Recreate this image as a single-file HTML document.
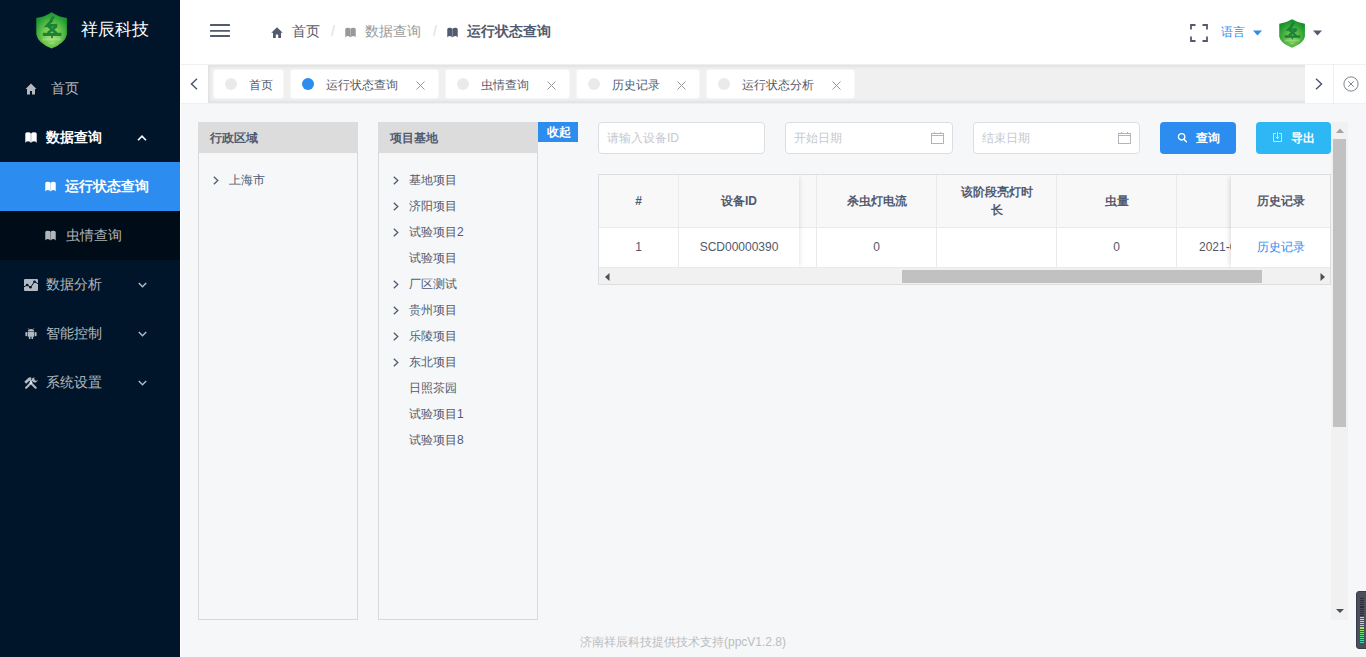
<!DOCTYPE html>
<html><head><meta charset="utf-8">
<style>
*{box-sizing:border-box;margin:0;padding:0}
html,body{width:1366px;height:657px;overflow:hidden;background:#f5f7f9;font-family:"Liberation Sans",sans-serif;color:#515a6e}
.abs{position:absolute}
.t{position:absolute;white-space:nowrap;line-height:20px}
#side{position:absolute;left:0;top:0;width:180px;height:657px;background:#001529}
#side .t{font-size:14px;color:rgba(255,255,255,.7)}
#hdr{position:absolute;left:180px;top:0;width:1186px;height:64px;background:#fff}
#tagnav{position:absolute;left:180px;top:64px;width:1186px;height:40px;background:#f0f0f0;border-top:1px solid #f0f0f0;border-bottom:1px solid #f0f0f0}
.tag{position:absolute;top:4px;border:1px solid #f6f6f6;height:30px;background:#fff;border-radius:3px}
.tag .dot{position:absolute;left:11px;top:8px;width:12px;height:12px;border-radius:50%;background:#e8eaec}
.tag .t{font-size:12px;top:5px;color:#515a6e}
.tag .x{position:absolute;top:11px;width:9px;height:9px}
.panel{position:absolute;top:122px;width:160px;height:498px;border:1px solid #d9d9d9;border-top:none}
.panel .ph{position:absolute;left:-1px;top:0;width:160px;height:31px;background:#dcdcdc}
.panel .t{font-size:12px}
.arr{position:absolute;width:6px;height:9px}
.inp{position:absolute;top:122px;height:32px;background:#fff;border:1px solid #dcdee2;border-radius:4px}
.inp .t{font-size:12px;color:#c5c8ce;top:5px}
.btn{position:absolute;top:122px;height:32px;border-radius:4px}
.btn .t{font-size:12px;font-weight:bold;color:#fff;top:6px}
#tbl{position:absolute;left:598px;top:174px;width:733px;height:111px;border:1px solid #dcdee2;background:#fff;overflow:hidden}
.th{position:absolute;top:0;height:53px;background:#f8f8f9;border-right:1px solid #e8eaec;border-bottom:1px solid #e8eaec}
.td{position:absolute;top:53px;height:40px;background:#fff;border-right:1px solid #e8eaec;border-bottom:1px solid #e8eaec}
.th .t,.td .t{font-size:12px}
.ct{position:absolute;left:0;right:0;top:50%;transform:translateY(-50%);text-align:center;font-size:12px;line-height:18px}
.th .ct{font-weight:bold}
.td .ct{margin-top:-1px}
</style></head><body>

<!-- SIDEBAR -->
<div id="side">
  <svg class="abs" style="left:36px;top:12px" width="31" height="37" viewBox="0 0 31 37">
    <defs>
      <radialGradient id="sg" cx="50%" cy="64%" r="60%"><stop offset="0" stop-color="#ace37f"/><stop offset="0.5" stop-color="#6cc74d"/><stop offset="1" stop-color="#1c9a30"/></radialGradient>
    </defs>
    <path d="M15.6 0.3 Q8 5.2 0.3 6 L0.3 22.5 Q2 31 15.6 36.6 Q29.2 31 30.9 22.5 L30.9 6 Q23.2 5.2 15.6 0.3 Z" fill="url(#sg)"/>
    <g stroke="#1b8236" fill="none" stroke-linecap="butt" stroke-linejoin="miter">
      <path d="M17.8 4.6 Q15.6 7 14.6 10" stroke-width="3"/>
      <path d="M15.6 8.6 L11 13.6 L21.2 13.2" stroke-width="2.8"/>
      <path d="M12.2 14 L20.6 21.4 M20.8 14 L11.8 21" stroke-width="2.8"/>
    </g>
    <rect x="6.8" y="20.8" width="18.6" height="3.2" fill="#1b8236"/>
    <rect x="15" y="23.8" width="1.8" height="2.4" fill="#1b8236"/>
    <rect x="6.5" y="26.3" width="18.3" height="2.2" fill="#c9ecb0" opacity=".35"/>
    <rect x="13.3" y="30" width="5.3" height="2.2" fill="#c9ecb0" opacity=".3"/>
  </svg>
  <div class="t" style="left:81px;top:20px;font-size:17px;color:#fff">祥辰科技</div>

  <!-- 首页 -->
  <svg class="abs" style="left:25px;top:83px" width="12" height="12" viewBox="0 0 12 12"><path d="M6 0.5 L0.5 6 L2 6 L2 11.5 L5 11.5 L5 8 L7 8 L7 11.5 L10 11.5 L10 6 L11.5 6 Z" fill="rgba(255,255,255,.7)"/></svg>
  <div class="t" style="left:51px;top:78px">首页</div>

  <!-- 数据查询 -->
  <svg class="abs" style="left:25px;top:132px" width="12" height="11" viewBox="0 0 12 11"><path d="M0.3 1.6 Q0.6 0.2 3 0.2 Q5.4 0.2 5.85 1.4 L5.85 11 Q5.3 9.2 3 9.2 Q0.7 9.2 0.3 11 Z M6.15 1.4 Q6.6 0.2 9 0.2 Q11.4 0.2 11.7 1.6 L11.7 11 Q11.3 9.2 9 9.2 Q6.7 9.2 6.15 11 Z" fill="#fff"/></svg>
  <div class="t" style="left:46px;top:127px;color:#fff;font-weight:bold">数据查询</div>
  <svg class="abs" style="left:137px;top:135px" width="10" height="6" viewBox="0 0 10 6"><path d="M1 5.2 L5 1.2 L9 5.2" stroke="#fff" stroke-width="1.6" fill="none"/></svg>

  <div class="abs" style="left:0;top:162px;width:180px;height:98px;background:#000c17"></div>
  <div class="abs" style="left:0;top:162px;width:180px;height:49px;background:#2d8cf0"></div>
  <svg class="abs" style="left:45px;top:181px" width="11" height="11" viewBox="0 0 12 11"><path d="M0.3 1.6 Q0.6 0.2 3 0.2 Q5.4 0.2 5.85 1.4 L5.85 11 Q5.3 9.2 3 9.2 Q0.7 9.2 0.3 11 Z M6.15 1.4 Q6.6 0.2 9 0.2 Q11.4 0.2 11.7 1.6 L11.7 11 Q11.3 9.2 9 9.2 Q6.7 9.2 6.15 11 Z" fill="#fff"/></svg>
  <div class="t" style="left:65px;top:176px;color:#fff;font-weight:bold">运行状态查询</div>
  <svg class="abs" style="left:45px;top:230px" width="11" height="11" viewBox="0 0 12 11"><path d="M0.3 1.6 Q0.6 0.2 3 0.2 Q5.4 0.2 5.85 1.4 L5.85 11 Q5.3 9.2 3 9.2 Q0.7 9.2 0.3 11 Z M6.15 1.4 Q6.6 0.2 9 0.2 Q11.4 0.2 11.7 1.6 L11.7 11 Q11.3 9.2 9 9.2 Q6.7 9.2 6.15 11 Z" fill="rgba(255,255,255,.7)"/></svg>
  <div class="t" style="left:66px;top:225px">虫情查询</div>

  <!-- 数据分析 -->
  <svg class="abs" style="left:24px;top:279px" width="14" height="12" viewBox="0 0 14 12"><rect x="0" y="0" width="14" height="12" rx="1" fill="rgba(255,255,255,.7)"/><path d="M0 7.8 L3.2 6 L6.5 8.3 L10.5 2.8 L14 4.6" stroke="#001529" stroke-width="1" fill="none"/><circle cx="3.2" cy="6" r="1.3" fill="#001529"/><circle cx="6.5" cy="8.3" r="1.3" fill="#001529"/><circle cx="10.5" cy="2.8" r="1.3" fill="#001529"/></svg>
  <div class="t" style="left:46px;top:274px">数据分析</div>
  <svg class="abs" style="left:138px;top:282px" width="9" height="6" viewBox="0 0 9 6"><path d="M0.8 1 L4.5 4.7 L8.2 1" stroke="rgba(255,255,255,.7)" stroke-width="1.5" fill="none"/></svg>

  <!-- 智能控制 -->
  <svg class="abs" style="left:25px;top:328px" width="12" height="11" viewBox="0 0 12 11"><g fill="rgba(255,255,255,.7)"><path d="M3 0.3 L4 1.4 M9 0.3 L8 1.4" stroke="rgba(255,255,255,.7)" stroke-width=".7"/><path d="M2.8 3.6 Q2.8 1 6 1 Q9.2 1 9.2 3.6 Z"/><rect x="2.8" y="3.9" width="6.4" height="4.9" rx=".6"/><rect x="0.4" y="3.9" width="1.9" height="4.3" rx=".9"/><rect x="9.7" y="3.9" width="1.9" height="4.3" rx=".9"/><rect x="3.9" y="8.4" width="1.6" height="2.6" rx=".6"/><rect x="6.5" y="8.4" width="1.6" height="2.6" rx=".6"/></g></svg>
  <div class="t" style="left:46px;top:323px">智能控制</div>
  <svg class="abs" style="left:138px;top:331px" width="9" height="6" viewBox="0 0 9 6"><path d="M0.8 1 L4.5 4.7 L8.2 1" stroke="rgba(255,255,255,.7)" stroke-width="1.5" fill="none"/></svg>

  <!-- 系统设置 -->
  <svg class="abs" style="left:24px;top:377px" width="14" height="12" viewBox="0 0 14 12"><g fill="rgba(255,255,255,.7)" stroke="none"><path d="M1.2 10.2 L7.2 4.2 L8.7 5.7 L2.7 11.7 Q1.9 12 1.3 11.5 Q0.8 10.9 1.2 10.2 Z"/><path d="M0.3 4.8 L4.2 0.9 Q6 -0.2 7.8 0.9 L6.8 2.2 L8.6 4 L7.1 5.5 L5.3 3.7 L2.2 6.8 Z"/><path d="M12.6 10.2 L6.6 4.2 L5.1 5.7 L11.1 11.7 Q11.9 12 12.5 11.5 Q13 10.9 12.6 10.2 Z"/><path d="M10.6 0.4 Q7.6 0.3 7.7 3.4 L9.9 5.6 Q13.3 5.8 13.6 2.8 L11.9 3.9 L10.2 2.2 Z"/></g></svg>
  <div class="t" style="left:46px;top:372px">系统设置</div>
  <svg class="abs" style="left:138px;top:380px" width="9" height="6" viewBox="0 0 9 6"><path d="M0.8 1 L4.5 4.7 L8.2 1" stroke="rgba(255,255,255,.7)" stroke-width="1.5" fill="none"/></svg>
</div>

<!-- HEADER -->
<div id="hdr"></div>
<svg class="abs" style="left:210px;top:24px" width="20" height="14" viewBox="0 0 20 14"><rect x="0" y="0.1" width="20" height="1.9" rx=".6" fill="#515a6e"/><rect x="0" y="5.9" width="20" height="1.9" rx=".6" fill="#515a6e"/><rect x="0" y="11.1" width="20" height="1.9" rx=".6" fill="#515a6e"/></svg>
<svg class="abs" style="left:271px;top:27px" width="12" height="11" viewBox="0 0 12 11"><path d="M6 0.3 L0.3 5.8 L2 5.8 L2 11 L4.8 11 L4.8 7.5 L7.2 7.5 L7.2 11 L10 11 L10 5.8 L11.7 5.8 Z" fill="#515a6e"/></svg>
<div class="t" style="left:292px;top:21px;font-size:14px;color:#515a6e">首页</div>
<div class="t" style="left:331px;top:21px;font-size:14px;color:#dcdee2">/</div>
<svg class="abs" style="left:345px;top:27px" width="11" height="11" viewBox="0 0 12 11"><path d="M0.3 1.6 Q0.6 0.2 3 0.2 Q5.4 0.2 5.85 1.4 L5.85 11 Q5.3 9.2 3 9.2 Q0.7 9.2 0.3 11 Z M6.15 1.4 Q6.6 0.2 9 0.2 Q11.4 0.2 11.7 1.6 L11.7 11 Q11.3 9.2 9 9.2 Q6.7 9.2 6.15 11 Z" fill="#999"/></svg>
<div class="t" style="left:365px;top:21px;font-size:14px;color:#999">数据查询</div>
<div class="t" style="left:433px;top:21px;font-size:14px;color:#dcdee2">/</div>
<svg class="abs" style="left:447px;top:27px" width="11" height="11" viewBox="0 0 12 11"><path d="M0.3 1.6 Q0.6 0.2 3 0.2 Q5.4 0.2 5.85 1.4 L5.85 11 Q5.3 9.2 3 9.2 Q0.7 9.2 0.3 11 Z M6.15 1.4 Q6.6 0.2 9 0.2 Q11.4 0.2 11.7 1.6 L11.7 11 Q11.3 9.2 9 9.2 Q6.7 9.2 6.15 11 Z" fill="#515a6e"/></svg>
<div class="t" style="left:467px;top:21px;font-size:14px;font-weight:bold;color:#515a6e">运行状态查询</div>
<svg class="abs" style="left:1190px;top:24px" width="18" height="18" viewBox="0 0 18 18"><path d="M1 5.5 L1 1 L5.5 1 M12.5 1 L17 1 L17 5.5 M17 12.5 L17 17 L12.5 17 M5.5 17 L1 17 L1 12.5" stroke="#515a6e" stroke-width="1.8" fill="none"/></svg>
<div class="t" style="left:1221px;top:22px;font-size:12px;color:#2d8cf0">语言</div>
<svg class="abs" style="left:1253px;top:30px" width="9" height="6" viewBox="0 0 9 6"><path d="M0 0.5 L9 0.5 L4.5 5.5 Z" fill="#2d8cf0"/></svg>
<svg class="abs" style="left:1279px;top:19px" width="26" height="29" preserveAspectRatio="none" viewBox="0 0 31 37">
    <defs>
      <radialGradient id="sg2" cx="50%" cy="66%" r="62%"><stop offset="0" stop-color="#93d86f"/><stop offset="0.5" stop-color="#52b541"/><stop offset="1" stop-color="#15912d"/></radialGradient>
    </defs>
    <path d="M15.6 0.3 Q8 5.2 0.3 6 L0.3 22.5 Q2 31 15.6 36.6 Q29.2 31 30.9 22.5 L30.9 6 Q23.2 5.2 15.6 0.3 Z" fill="url(#sg2)"/>
    <g stroke="#1b8236" fill="none" stroke-linecap="butt" stroke-linejoin="miter">
      <path d="M17.8 4.6 Q15.6 7 14.6 10" stroke-width="3"/>
      <path d="M15.6 8.6 L11 13.6 L21.2 13.2" stroke-width="2.8"/>
      <path d="M12.2 14 L20.6 21.4 M20.8 14 L11.8 21" stroke-width="2.8"/>
    </g>
    <rect x="6.8" y="20.8" width="18.6" height="3.2" fill="#1b8236"/>
    <rect x="15" y="23.8" width="1.8" height="2.4" fill="#1b8236"/>
    <rect x="6.5" y="26.3" width="18.3" height="2.2" fill="#c9ecb0" opacity=".35"/>
    <rect x="13.3" y="30" width="5.3" height="2.2" fill="#c9ecb0" opacity=".3"/>
  </svg>
<svg class="abs" style="left:1313px;top:30px" width="9" height="6" viewBox="0 0 9 6"><path d="M0 0.5 L9 0.5 L4.5 5.5 Z" fill="#515a6e"/></svg>


<!-- TAG NAV -->
<div id="tagnav">
<div class="abs" style="left:28px;top:0;width:1125px;height:38px;box-shadow:0 0 3px 2px rgba(100,100,100,.1) inset"></div>
<div class="tag" style="left:33px;width:71px"><div class="dot" style="background:#e8eaec"></div><div class="t" style="left:35px">首页</div></div><div class="tag" style="left:110px;width:149px"><div class="dot" style="background:#2d8cf0"></div><div class="t" style="left:35px">运行状态查询</div><svg class="x" style="left:125px" width="9" height="9" viewBox="0 0 9 9"><path d="M0.5 0.5 L8.5 8.5 M8.5 0.5 L0.5 8.5" stroke="#999" stroke-width="1"/></svg></div><div class="tag" style="left:265px;width:125px"><div class="dot" style="background:#e8eaec"></div><div class="t" style="left:35px">虫情查询</div><svg class="x" style="left:101px" width="9" height="9" viewBox="0 0 9 9"><path d="M0.5 0.5 L8.5 8.5 M8.5 0.5 L0.5 8.5" stroke="#999" stroke-width="1"/></svg></div><div class="tag" style="left:396px;width:124px"><div class="dot" style="background:#e8eaec"></div><div class="t" style="left:35px">历史记录</div><svg class="x" style="left:100px" width="9" height="9" viewBox="0 0 9 9"><path d="M0.5 0.5 L8.5 8.5 M8.5 0.5 L0.5 8.5" stroke="#999" stroke-width="1"/></svg></div><div class="tag" style="left:526px;width:149px"><div class="dot" style="background:#e8eaec"></div><div class="t" style="left:35px">运行状态分析</div><svg class="x" style="left:125px" width="9" height="9" viewBox="0 0 9 9"><path d="M0.5 0.5 L8.5 8.5 M8.5 0.5 L0.5 8.5" stroke="#999" stroke-width="1"/></svg></div>
<div class="abs" style="left:1px;top:0;width:27px;height:38px;background:#fff"></div>
<svg class="abs" style="left:10px;top:13px" width="8" height="12" viewBox="0 0 8 12"><path d="M7 0.8 L1.5 6 L7 11.2" stroke="#515a6e" stroke-width="1.5" fill="none"/></svg>
<div class="abs" style="left:1125px;top:0;width:29px;height:38px;background:#fff;border-right:1px solid #f0f0f0"></div>
<svg class="abs" style="left:1135px;top:13px" width="8" height="12" viewBox="0 0 8 12"><path d="M1 0.8 L6.5 6 L1 11.2" stroke="#515a6e" stroke-width="1.5" fill="none"/></svg>
<div class="abs" style="left:1154px;top:0;width:32px;height:38px;background:#fff"></div>
<svg class="abs" style="left:1163px;top:11px" width="16" height="16" viewBox="0 0 16 16"><circle cx="8" cy="8" r="7.1" stroke="#6f7585" stroke-width=".9" fill="none"/><path d="M5.3 5.3 L10.7 10.7 M10.7 5.3 L5.3 10.7" stroke="#6f7585" stroke-width=".9"/></svg>
</div>
<div class="abs" style="left:180px;top:0;width:1px;height:657px;background:#fff"></div>


<!-- CONTENT -->
<div id="content">
<div class="panel" style="left:198px"><div class="ph"></div><div class="t" style="left:11px;top:6px;font-weight:bold">行政区域</div><svg class="arr" style="left:14px;top:54px" width="6" height="9" viewBox="0 0 6 9"><path d="M0.8 0.8 L4.8 4.5 L0.8 8.2" stroke="#515a6e" stroke-width="1.3" fill="none"/></svg><div class="t" style="left:30px;top:48px">上海市</div></div>
<div class="panel" style="left:378px"><div class="ph"></div><div class="t" style="left:11px;top:6px;font-weight:bold">项目基地</div><svg class="arr" style="left:14px;top:54px" width="6" height="9" viewBox="0 0 6 9"><path d="M0.8 0.8 L4.8 4.5 L0.8 8.2" stroke="#515a6e" stroke-width="1.3" fill="none"/></svg><div class="t" style="left:30px;top:48px">基地项目</div><svg class="arr" style="left:14px;top:80px" width="6" height="9" viewBox="0 0 6 9"><path d="M0.8 0.8 L4.8 4.5 L0.8 8.2" stroke="#515a6e" stroke-width="1.3" fill="none"/></svg><div class="t" style="left:30px;top:74px">济阳项目</div><svg class="arr" style="left:14px;top:106px" width="6" height="9" viewBox="0 0 6 9"><path d="M0.8 0.8 L4.8 4.5 L0.8 8.2" stroke="#515a6e" stroke-width="1.3" fill="none"/></svg><div class="t" style="left:30px;top:100px">试验项目2</div><div class="t" style="left:30px;top:126px">试验项目</div><svg class="arr" style="left:14px;top:158px" width="6" height="9" viewBox="0 0 6 9"><path d="M0.8 0.8 L4.8 4.5 L0.8 8.2" stroke="#515a6e" stroke-width="1.3" fill="none"/></svg><div class="t" style="left:30px;top:152px">厂区测试</div><svg class="arr" style="left:14px;top:184px" width="6" height="9" viewBox="0 0 6 9"><path d="M0.8 0.8 L4.8 4.5 L0.8 8.2" stroke="#515a6e" stroke-width="1.3" fill="none"/></svg><div class="t" style="left:30px;top:178px">贵州项目</div><svg class="arr" style="left:14px;top:210px" width="6" height="9" viewBox="0 0 6 9"><path d="M0.8 0.8 L4.8 4.5 L0.8 8.2" stroke="#515a6e" stroke-width="1.3" fill="none"/></svg><div class="t" style="left:30px;top:204px">乐陵项目</div><svg class="arr" style="left:14px;top:236px" width="6" height="9" viewBox="0 0 6 9"><path d="M0.8 0.8 L4.8 4.5 L0.8 8.2" stroke="#515a6e" stroke-width="1.3" fill="none"/></svg><div class="t" style="left:30px;top:230px">东北项目</div><div class="t" style="left:30px;top:256px">日照茶园</div><div class="t" style="left:30px;top:282px">试验项目1</div><div class="t" style="left:30px;top:308px">试验项目8</div></div>
<div class="abs" style="left:538px;top:122px;width:40px;height:20px;background:#2d8cf0"><div class="t" style="left:9px;top:0;font-size:12px;font-weight:bold;color:#fff">收起</div></div>
<div class="inp" style="left:598px;width:167px"><div class="t" style="left:8px">请输入设备ID</div></div>
<div class="inp" style="left:785px;width:168px"><div class="t" style="left:8px">开始日期</div><svg class="abs" style="left:145px;top:9px" width="13" height="12" viewBox="0 0 13 12"><rect x="0.5" y="1.5" width="12" height="10" stroke="#a9adb6" stroke-width=".9" fill="none"/><path d="M0.5 3.5 L12.5 3.5 M3.5 0 L3.5 2 M9.5 0 L9.5 2" stroke="#a9adb6" stroke-width=".9"/></svg></div>
<div class="inp" style="left:973px;width:167px"><div class="t" style="left:8px">结束日期</div><svg class="abs" style="left:144px;top:9px" width="13" height="12" viewBox="0 0 13 12"><rect x="0.5" y="1.5" width="12" height="10" stroke="#a9adb6" stroke-width=".9" fill="none"/><path d="M0.5 3.5 L12.5 3.5 M3.5 0 L3.5 2 M9.5 0 L9.5 2" stroke="#a9adb6" stroke-width=".9"/></svg></div>
<div class="btn" style="left:1160px;width:76px;background:#2d8cf0">
<svg class="abs" style="left:17px;top:10px" width="10" height="11" viewBox="0 0 10 11"><circle cx="4.6" cy="4.8" r="3.2" stroke="#fff" stroke-width="1.3" fill="none"/><path d="M6.9 7.2 L9.4 9.7" stroke="#fff" stroke-width="1.5" stroke-linecap="round"/></svg>
<div class="t" style="left:36px">查询</div></div>
<div class="btn" style="left:1256px;width:75px;background:#2db7f5">
<svg class="abs" style="left:17px;top:10px" width="9" height="10" viewBox="0 0 9 10"><path d="M3 1.5 L0.5 1.5 L0.5 9.5 L8.5 9.5 L8.5 1.5 L6 1.5 M4.5 0 L4.5 6.5 M2.8 4.8 L4.5 6.6 L6.2 4.8" stroke="rgba(255,255,255,.75)" stroke-width=".9" fill="none"/></svg>
<div class="t" style="left:35px">导出</div></div>
<div id="tbl"><div class="th" style="left:200px;width:18px"><div class="ct"></div></div><div class="td" style="left:200px;width:18px"><div class="ct"></div></div><div class="th" style="left:218px;width:120px"><div class="ct">杀虫灯电流</div></div><div class="td" style="left:218px;width:120px"><div class="ct">0</div></div><div class="th" style="left:338px;width:120px"><div class="ct">该阶段亮灯时<br>长</div></div><div class="td" style="left:338px;width:120px"><div class="ct"></div></div><div class="th" style="left:458px;width:120px"><div class="ct">虫量</div></div><div class="td" style="left:458px;width:120px"><div class="ct">0</div></div><div class="th" style="left:578px;width:120px"><div class="ct"></div></div><div class="td" style="left:578px;width:120px"><div class="t" style="left:22px;top:9px;font-size:12px">2021-04-15</div></div><div class="abs" style="left:0;top:0;width:199px;height:93px;box-shadow:2px 0 6px -2px rgba(0,0,0,.2);background:#fff"><div class="th" style="left:0;width:80px"><div class="ct">#</div></div><div class="th" style="left:80px;width:120px;border-right:none"><div class="ct">设备ID</div></div><div class="td" style="left:0;width:80px"><div class="ct">1</div></div><div class="td" style="left:80px;width:120px;border-right:none"><div class="ct">SCD00000390</div></div></div><div class="abs" style="left:632px;top:0;width:100px;height:93px;box-shadow:-2px 0 6px -2px rgba(0,0,0,.2);background:#fff"><div class="th" style="left:0;width:100px;border-right:none"><div class="ct">历史记录</div></div><div class="td" style="left:0;width:100px;border-right:none"><div class="ct" style="color:#2d8cf0">历史记录</div></div></div><div class="abs" style="left:0;top:93px;width:731px;height:16px;background:#f1f1f1"></div>
<div class="abs" style="left:303px;top:95px;width:360px;height:13px;background:#c1c1c1"></div>
<svg class="abs" style="left:6px;top:98px" width="5" height="8" viewBox="0 0 5 8"><path d="M4.5 0 L0 4 L4.5 8 Z" fill="#505050"/></svg>
<svg class="abs" style="left:721px;top:98px" width="5" height="8" viewBox="0 0 5 8"><path d="M0.5 0 L5 4 L0.5 8 Z" fill="#505050"/></svg>
</div>
<div class="abs" style="left:1331px;top:122px;width:17px;height:498px;background:#f1f1f1"></div>
<div class="abs" style="left:1333px;top:139px;width:13px;height:288px;background:#c1c1c1"></div>
<svg class="abs" style="left:1336px;top:128px" width="8" height="5" viewBox="0 0 8 5"><path d="M0 5 L4 0.5 L8 5 Z" fill="#a3a3a3"/></svg>
<svg class="abs" style="left:1336px;top:609px" width="8" height="4" viewBox="0 0 8 4"><path d="M0 0 L8 0 L4 4 Z" fill="#505050"/></svg>
<div class="t" style="left:580px;top:632px;font-size:12px;color:#bdbdbd">济南祥辰科技提供技术支持(ppcV1.2.8)</div>
</div>

<div class="abs" style="left:1356px;top:591px;width:14px;height:58px;background:#4b4f5c;border:1px solid #3a3d47;border-radius:3px"></div><div class="abs" style="left:1360px;top:598.0px;width:4px;height:1.2px;background:#2b2e37"></div><div class="abs" style="left:1360px;top:600.1px;width:4px;height:1.2px;background:#2b2e37"></div><div class="abs" style="left:1360px;top:602.2px;width:4px;height:1.2px;background:#2b2e37"></div><div class="abs" style="left:1360px;top:604.3px;width:4px;height:1.2px;background:#2b2e37"></div><div class="abs" style="left:1360px;top:606.4px;width:4px;height:1.2px;background:#2b2e37"></div><div class="abs" style="left:1360px;top:608.5px;width:4px;height:1.2px;background:#2b2e37"></div><div class="abs" style="left:1360px;top:610.6px;width:4px;height:1.2px;background:#2b2e37"></div><div class="abs" style="left:1360px;top:612.7px;width:4px;height:1.2px;background:#2b2e37"></div><div class="abs" style="left:1360px;top:614.8px;width:4px;height:1.2px;background:#2b2e37"></div><div class="abs" style="left:1360px;top:616.9px;width:4px;height:1.2px;background:#e3e05b"></div><div class="abs" style="left:1360px;top:619.0px;width:4px;height:1.2px;background:#e0e05d"></div><div class="abs" style="left:1360px;top:621.1px;width:4px;height:1.2px;background:#d6e05f"></div><div class="abs" style="left:1360px;top:623.2px;width:4px;height:1.2px;background:#c8e062"></div><div class="abs" style="left:1360px;top:625.3px;width:4px;height:1.2px;background:#b9df66"></div><div class="abs" style="left:1360px;top:627.4px;width:4px;height:1.2px;background:#a8de6a"></div><div class="abs" style="left:1360px;top:629.5px;width:4px;height:1.2px;background:#96dd70"></div><div class="abs" style="left:1360px;top:631.6px;width:4px;height:1.2px;background:#84db78"></div><div class="abs" style="left:1360px;top:633.7px;width:4px;height:1.2px;background:#72da84"></div><div class="abs" style="left:1360px;top:635.8px;width:4px;height:1.2px;background:#62d891"></div><div class="abs" style="left:1360px;top:637.9px;width:4px;height:1.2px;background:#55d69e"></div><div class="abs" style="left:1360px;top:640.0px;width:4px;height:1.2px;background:#4ad5aa"></div><div class="abs" style="left:1360px;top:642.1px;width:4px;height:1.2px;background:#43d4b3"></div>
</body></html>
